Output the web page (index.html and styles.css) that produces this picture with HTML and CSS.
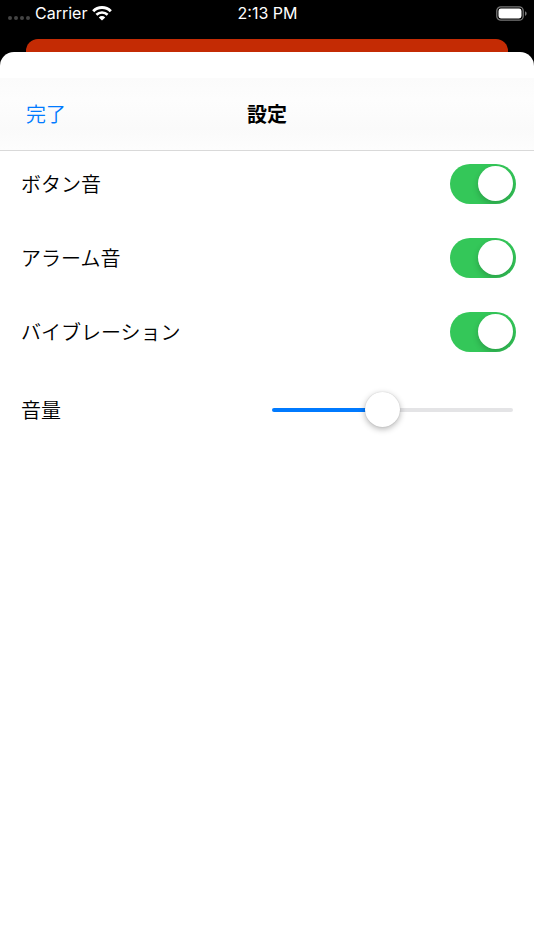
FILE: index.html
```html
<!DOCTYPE html>
<html lang="ja">
<head>
<meta charset="utf-8">
<meta name="viewport" content="width=device-width, initial-scale=1">
<title>設定</title>
<link rel="stylesheet" href="styles.css">
</head>
<body>
<div class="status">
  <div class="carrier">
    <span class="signal"><i></i><i></i><i></i><i></i></span>
    <span>Carrier</span>
    <svg class="wifi" viewBox="0 0 20 15" aria-hidden="true">
      <path d="M1.2 5.2a12.6 12.6 0 0 1 17.6 0" fill="none" stroke="#fff" stroke-width="3"/>
      <path d="M4.4 8.8a8 8 0 0 1 11.2 0" fill="none" stroke="#fff" stroke-width="2.6"/>
      <path d="M10 14.6 6.8 11.4a4.6 4.6 0 0 1 6.4 0z" fill="#fff"/>
    </svg>
  </div>
  <time>2:13 PM</time>
  <svg class="battery" viewBox="0 0 31 15" aria-hidden="true">
    <rect x=".8" y=".8" width="26.4" height="13.4" rx="4" fill="none" stroke="#777" stroke-width="1.3"/>
    <rect x="2.5" y="2.5" width="23" height="10" rx="2.4" fill="#fff"/>
    <path d="M29 5.2c2.2.8 2.2 3.8 0 4.6z" fill="#777"/>
  </svg>
</div>
<div class="backdrop"></div>
<main class="sheet">
  <header class="nav">
    <button class="done" type="button">完了</button>
    <h1>設定</h1>
  </header>
  <form class="settings">
    <div class="row">
      <label for="button-sound">ボタン音</label>
      <input class="switch" id="button-sound" type="checkbox" role="switch" checked>
    </div>
    <div class="row">
      <label for="alarm-sound">アラーム音</label>
      <input class="switch" id="alarm-sound" type="checkbox" role="switch" checked>
    </div>
    <div class="row">
      <label for="vibration">バイブレーション</label>
      <input class="switch" id="vibration" type="checkbox" role="switch" checked>
    </div>
    <div class="row row-volume">
      <label for="volume">音量</label>
      <input class="slider" id="volume" type="range" min="0" max="100" value="45">
    </div>
  </form>
</main>
</body>
</html>
```
FILE: styles.css
```css
* {
  box-sizing: border-box;
}

body {
  margin: 0;
  min-height: 100vh;
  display: flex;
  flex-direction: column;
  background: #000;
  color: #000;
  font-family: Inter, "Noto Sans CJK JP", sans-serif;
  font-size: 20px;
  line-height: 28px;
}

.status {
  display: grid;
  grid-template-columns: 1fr auto 1fr;
  align-items: center;
  height: 26px;
  padding: 0 7px 0 8px;
  color: #fff;
  font-size: 16px;
  line-height: 26px;
}

.carrier {
  display: flex;
  align-items: center;
  gap: 5px;
}

.signal {
  display: flex;
  gap: 2px;
  padding-top: 9px;
}

.signal i {
  width: 4px;
  height: 4px;
  border-radius: 50%;
  background: #444;
}

.wifi {
  width: 20px;
  height: 15px;
}

.battery {
  width: 31px;
  height: 15px;
  justify-self: end;
}

.backdrop {
  height: 27px;
  margin: 13px 26px -14px;
  border-radius: 12px 12px 0 0;
  background: linear-gradient(#c42b04 13px, #000 13px);
}

.sheet {
  flex: 1;
  padding-top: 26px;
  border-radius: 14px 14px 0 0;
  background: #fff;
}

.nav {
  display: grid;
  grid-template-columns: 1fr auto 1fr;
  align-items: center;
  height: 73px;
  padding: 2px 26px 0;
  border-bottom: 1px solid #d9d9d9;
  background: linear-gradient(#fbfbfb, #fdfdfd 30%, #fafafa 70%, #fdfdfd);
}

.done {
  justify-self: start;
  padding: 0;
  border: 0;
  background: none;
  color: #007aff;
  font: inherit;
  font-weight: 350;
}

.nav h1 {
  margin: 0;
  font-size: 20px;
  font-weight: 700;
}

.settings {
  display: flex;
  flex-direction: column;
  gap: 34px;
  padding: 13px 18px 0 21px;
}

.row {
  display: flex;
  align-items: center;
  justify-content: space-between;
  height: 40px;
}

.row label {
  padding-top: 2px;
  font-weight: 350;
}

.row-volume {
  height: 48px;
  padding-right: 3px;
}

.row-volume label {
  flex: 0 0 251px;
}

.switch {
  appearance: none;
  display: flex;
  width: 66px;
  height: 40px;
  margin: 0;
  padding: 2px 3px 3px;
  border-radius: 20px;
  background: #e9e9ea;
  overflow: hidden;
}

.switch::before {
  content: "";
  width: 35px;
  height: 35px;
  border-radius: 50%;
  background: #fff;
  box-shadow: 0 3px 6px rgba(0, 0, 0, .2);
}

.switch:checked {
  justify-content: flex-end;
  background: #34c759;
}

.slider {
  appearance: none;
  flex: 1;
  min-width: 0;
  height: 36px;
  margin: 0;
  background: none;
}

.slider::-webkit-slider-runnable-track {
  height: 4px;
  border-radius: 2px;
  background: linear-gradient(to right, #007aff 45%, #e4e4e6 45%);
}

.slider::-webkit-slider-thumb {
  appearance: none;
  width: 35px;
  height: 35px;
  margin-top: -16px;
  border-radius: 50%;
  background: #fff;
  box-shadow: 0 2px 6px rgba(0, 0, 0, .3), 0 0 1px rgba(0, 0, 0, .2);
}
```
